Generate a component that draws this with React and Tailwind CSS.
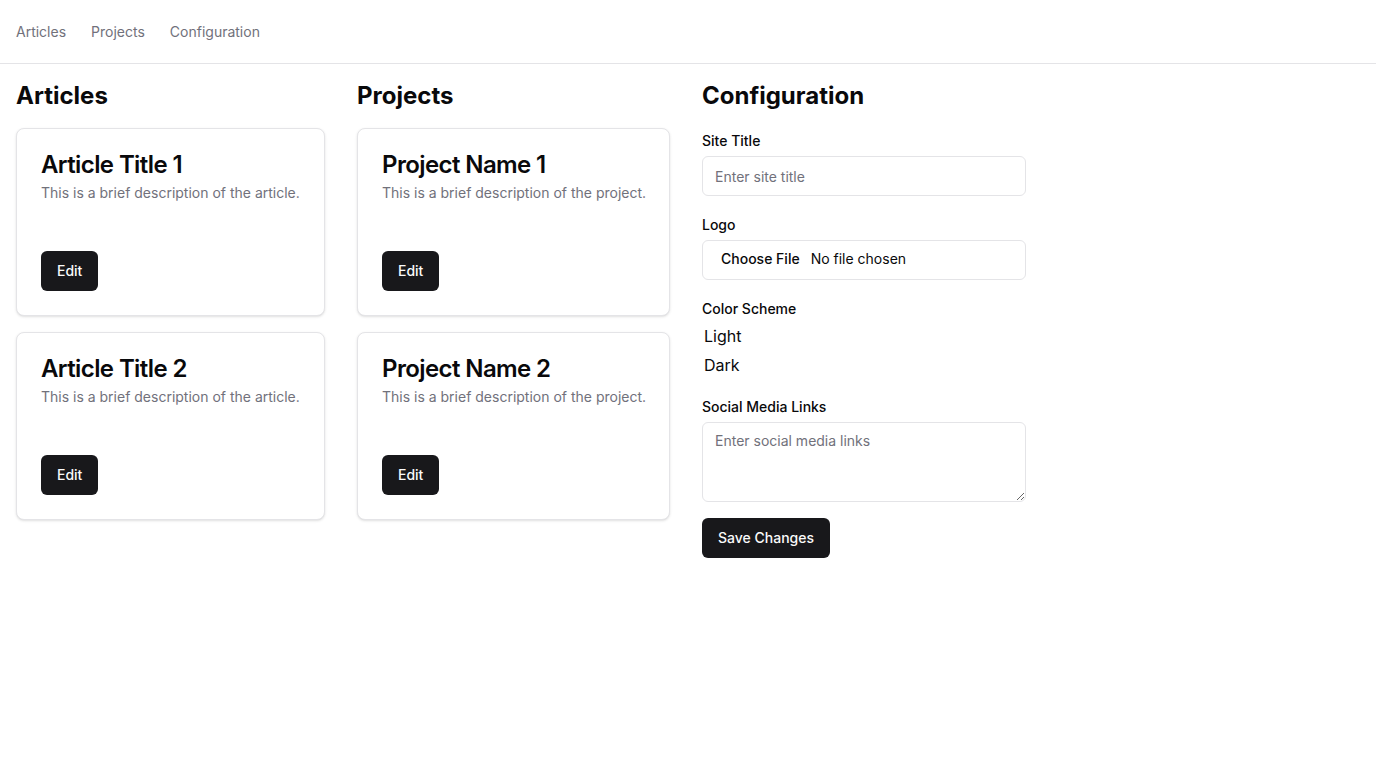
import React from "react";

const articles = [
  { id: 1, title: "Article Title 1" },
  { id: 2, title: "Article Title 2" },
];

const projects = [
  { id: 1, title: "Project Name 1" },
  { id: 2, title: "Project Name 2" },
];

const Card = ({ title, description }) => (
  <div className="rounded-lg border border-zinc-200 bg-white shadow-sm">
    <div className="flex flex-col gap-1.5 p-6">
      <h3 className="text-2xl font-semibold leading-none tracking-tight text-zinc-950">{title}</h3>
      <p className="whitespace-nowrap text-sm leading-5 text-zinc-500">{description}</p>
    </div>
    <div className="p-6 pt-0">
      <div className="pt-6">
        <button className="h-10 rounded-md bg-zinc-900 px-4 text-sm font-medium text-zinc-50">Edit</button>
      </div>
    </div>
  </div>
);

export default function App() {
  return (
    <div className="min-h-screen bg-white font-['Inter',sans-serif] text-zinc-950">
      {/* Top nav */}
      <nav className="flex h-16 items-center gap-[25px] border-b border-zinc-200 px-4">
        <a href="#articles" className="text-sm text-zinc-500">Articles</a>
        <a href="#projects" className="text-sm text-zinc-500">Projects</a>
        <a href="#configuration" className="text-sm text-zinc-500">Configuration</a>
      </nav>

      <main className="flex items-start gap-8 p-4">
        {/* Articles */}
        <section id="articles" className="w-[309px]">
          <h2 className="mb-4 text-2xl font-bold leading-8">Articles</h2>
          <div className="flex flex-col gap-4">
            {articles.map((a) => (
              <Card key={a.id} title={a.title} description="This is a brief description of the article." />
            ))}
          </div>
        </section>

        {/* Projects */}
        <section id="projects" className="w-[313px]">
          <h2 className="mb-4 text-2xl font-bold leading-8">Projects</h2>
          <div className="flex flex-col gap-4">
            {projects.map((p) => (
              <Card key={p.id} title={p.title} description="This is a brief description of the project." />
            ))}
          </div>
        </section>

        {/* Configuration */}
        <section id="configuration" className="w-[324px]">
          <h2 className="text-2xl font-bold leading-8">Configuration</h2>
          <form className="flex flex-col" onSubmit={(e) => e.preventDefault()}>
            <div className="mt-[22px] flex flex-col gap-2">
              <label className="text-sm font-medium leading-none">Site Title</label>
              <input
                type="text"
                placeholder="Enter site title"
                className="h-10 w-full rounded-md border border-zinc-200 bg-white px-3 text-sm placeholder:text-zinc-500 focus:outline-none"
              />
            </div>

            <div className="mt-[22px] flex flex-col gap-2">
              <label className="text-sm font-medium leading-none">Logo</label>
              <input
                type="file"
                className="h-10 w-full rounded-md border border-zinc-200 bg-white px-3 py-2 text-sm file:mr-[5px] file:border-0 file:bg-transparent file:px-1.5 file:text-sm file:font-medium"
              />
            </div>

            <div className="mt-[22px] flex flex-col">
              <label className="text-sm font-medium leading-none">Color Scheme</label>
              <div className="mt-2 flex flex-col gap-[5px] pl-0.5 text-base leading-6">
                <span>Light</span>
                <span>Dark</span>
              </div>
            </div>

            <div className="mt-[23px] flex flex-col gap-2">
              <label className="text-sm font-medium leading-none">Social Media Links</label>
              <textarea
                placeholder="Enter social media links"
                className="block h-20 w-full rounded-md border border-zinc-200 bg-white px-3 py-2 text-sm placeholder:text-zinc-500 focus:outline-none"
              />
            </div>

            <div className="mt-4">
              <button type="submit" className="h-10 rounded-md bg-zinc-900 px-4 text-sm font-medium text-zinc-50">
                Save Changes
              </button>
            </div>
          </form>
        </section>
      </main>
    </div>
  );
}
